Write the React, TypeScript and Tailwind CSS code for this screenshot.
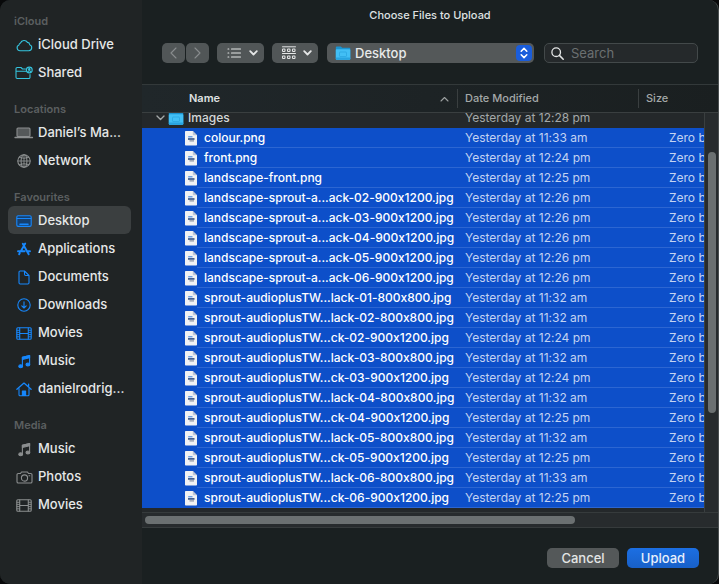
import type { ReactNode } from "react";

function Svg({ w, h, box, children }: { w: number; h: number; box: string; children: ReactNode }) {
  return (
    <svg
      width={w}
      height={h}
      viewBox={box}
      fill="none"
      stroke="currentColor"
      strokeWidth="1.1"
      strokeLinecap="round"
      strokeLinejoin="round"
      aria-hidden="true"
      className="shrink-0"
    >
      {children}
    </svg>
  );
}

const CloudIcon = () => (
  <Svg w={17} h={13} box="0 0 17 13">
    <path d="M4.200 11.700h8.600a3.100 3.100 0 0 0 .9-6 2.400 2.400 0 0 0-2.200-2.300A3.900 3.900 0 0 0 4.500 4 2.300 2.300 0 0 0 3 6a2.950 2.950 0 0 0 1.200 5.700z" />
  </Svg>
);

const SharedIcon = () => (
  <Svg w={18} h={14} box="0 0 18 14">
    <path d="M10.500 3H7.500L6 1.500H2.200A1.200 1.200 0 0 0 1 2.700v8.600a1.200 1.200 0 0 0 1.200 1.200h11.600a1.200 1.200 0 0 0 1.200-1.200V8.500M1 5.200h10" />
    <circle cx="14.300" cy="4" r="2.900" />
    <circle cx="14.300" cy="3.200" r=".7" fill="currentColor" />
    <path d="M12.900 5.600q1.400-1.600 2.800 0" />
  </Svg>
);

const LaptopIcon = () => (
  <Svg w={20} h={12} box="0 0 20 12">
    <rect x="3" y="1" width="13" height="8.500" rx="1" fill="#55595a" />
    <path d="M1 10.500h17.500" strokeWidth="1.300" />
  </Svg>
);

const GlobeIcon = () => (
  <Svg w={14} h={14} box="0 0 14 14">
    <circle cx="7" cy="7" r="6.200" />
    <ellipse cx="7" cy="7" rx="2.900" ry="6.200" />
    <path d="M7 .8v12.400M.8 7h12.400M2.300 3.400q4.700 2 9.400 0M2.300 10.600q4.700-2 9.400 0" strokeWidth=".9" />
  </Svg>
);

const DesktopIcon = () => (
  <Svg w={16} h={12} box="0 0 16 12">
    <rect x=".8" y=".8" width="14.400" height="10.600" rx="1.300" fill="#16406f" />
    <path d="M1 3.500h14" />
    <path d="M4 9.200h8" strokeWidth="1.600" />
  </Svg>
);

const ApplicationsIcon = () => (
  <Svg w={14} h={14} box="0 0 14 14">
    <path d="M5.800 1.800l5.900 10.400M8.200 1.500L4.100 8.800M2.800 11l-.7 1.200M1 9.200h6.600M11 9.200h2" strokeWidth="1.900" />
  </Svg>
);

const DocumentIcon = () => (
  <Svg w={12} h={15} box="0 0 12 15">
    <path d="M2.200 1h4.300L11 5.500v7.300a1.200 1.200 0 0 1-1.200 1.200H2.200A1.200 1.200 0 0 1 1 12.800V2.200A1.200 1.200 0 0 1 2.200 1zM6.500 1v3.300a1.200 1.200 0 0 0 1.200 1.200H11" />
  </Svg>
);

const DownloadIcon = () => (
  <Svg w={14} h={14} box="0 0 14 14">
    <circle cx="7" cy="7" r="6.200" />
    <path d="M7 3.800v6M4.800 7.800L7 10l2.200-2.200" />
  </Svg>
);

const FilmIcon = () => (
  <Svg w={16} h={13} box="0 0 16 13">
    <rect x=".8" y=".8" width="14.400" height="11.400" rx="1" />
    <path d="M3.700 1v11M12.300 1v11M3.700 6.500h8.600" />
    <path d="M1 3.300h2.500M1 5.400h2.500M1 7.600h2.500M1 9.800h2.500M12.500 3.300H15M12.500 5.400H15M12.500 7.600H15M12.500 9.800H15" strokeWidth=".9" />
  </Svg>
);

const NoteIcon = () => (
  <Svg w={13} h={15} box="0 0 13 15">
    <path d="M4.400 12V3.200L11.600 1.500v8.700" />
    <path d="M4.400 3.300l7.200-1.700v2.200L4.400 5.500z" fill="currentColor" />
    <ellipse cx="2.700" cy="12.200" rx="1.900" ry="1.500" fill="currentColor" />
    <ellipse cx="9.900" cy="10.500" rx="1.900" ry="1.500" fill="currentColor" />
  </Svg>
);

const HomeIcon = () => (
  <Svg w={16} h={15} box="0 0 16 15">
    <path d="M.9 7.300L8 1.100l7.100 6.200M12.600 4.800V2.200" strokeWidth="1.300" />
    <path d="M3 6.500v6.300a1 1 0 0 0 1 1h8a1 1 0 0 0 1-1V6.500" />
    <path d="M6.400 13.500V9h3.200v4.500z" fill="currentColor" />
  </Svg>
);

const CameraIcon = () => (
  <Svg w={17} h={13} box="0 0 17 13">
    <path d="M2.300 2.500h2.200l1-1.500h6l1 1.500h2.200A1.300 1.300 0 0 1 16 3.800v6.900a1.300 1.300 0 0 1-1.300 1.300H2.300A1.300 1.300 0 0 1 1 10.700V3.800a1.300 1.300 0 0 1 1.300-1.300z" />
    <circle cx="8.500" cy="7" r="3.100" />
    <path d="M13 4.700h.8" />
  </Svg>
);

function FolderIcon() {
  return (
    <svg width="16" height="14" viewBox="0 0 16 14" aria-hidden="true" className="shrink-0">
      <path d="M.8 1.600a1 1 0 0 1 1-1h4l1.500 1.200h7a1 1 0 0 1 1 1V12.600a1 1 0 0 1-1 1H1.800a1 1 0 0 1-1-1z" fill="#1c93cf" />
      <rect x=".8" y="3.200" width="14.500" height="10.500" rx=".9" fill="#42bff5" />
      <rect x=".8" y="11.500" width="14.500" height="2.200" rx=".9" fill="#28a4e0" />
      <rect x="4.500" y="6" width="7" height="4.500" rx=".6" fill="none" stroke="#2fabe5" />
    </svg>
  );
}

function FileIcon() {
  return (
    <svg width="12" height="15" viewBox="0 0 12 15" aria-hidden="true" className="shrink-0">
      <path d="M.8 0h7L12 4.200v9.600a.8.800 0 0 1-.8.800H.8a.8.800 0 0 1-.8-.8V.8A.8.800 0 0 1 .8 0z" fill="#f1f2f4" />
      <path d="M7.800 0v3.400a.8.800 0 0 0 .8.800H12z" fill="#bfc6d2" />
      <path d="M3.200 5.700h4.300" stroke="#6d9fe6" strokeWidth="1.400" />
      <path d="M3 7.900h6.500" stroke="#24467f" strokeWidth="1.500" />
      <path d="M4.500 9.900h4.500" stroke="#8b93a3" strokeWidth="1.200" />
    </svg>
  );
}

const Chevron = () => (
  <Svg w={9} h={6} box="0 0 9 6">
    <path d="M1.200 1.200l3.300 3.300 3.300-3.300" strokeWidth="1.800" />
  </Svg>
);

type Item = { name: string; icon: ReactNode; selected?: boolean };
type Section = { title: string; tint: string; items: Item[] };

const sections: Section[] = [
  {
    title: "iCloud",
    tint: "text-[#35c3dd]",
    items: [
      { name: "iCloud Drive", icon: <CloudIcon /> },
      { name: "Shared", icon: <SharedIcon /> },
    ],
  },
  {
    title: "Locations",
    tint: "text-[#8b8e8f]",
    items: [
      { name: "Daniel’s Ma...", icon: <LaptopIcon /> },
      { name: "Network", icon: <GlobeIcon /> },
    ],
  },
  {
    title: "Favourites",
    tint: "text-[#1787fb]",
    items: [
      { name: "Desktop", icon: <DesktopIcon />, selected: true },
      { name: "Applications", icon: <ApplicationsIcon /> },
      { name: "Documents", icon: <DocumentIcon /> },
      { name: "Downloads", icon: <DownloadIcon /> },
      { name: "Movies", icon: <FilmIcon /> },
      { name: "Music", icon: <NoteIcon /> },
      { name: "danielrodrig...", icon: <HomeIcon /> },
    ],
  },
  {
    title: "Media",
    tint: "text-[#8b8e8f]",
    items: [
      { name: "Music", icon: <NoteIcon /> },
      { name: "Photos", icon: <CameraIcon /> },
      { name: "Movies", icon: <FilmIcon /> },
    ],
  },
];

const files: [string, string][] = [
  ["colour.png", "11:33 am"],
  ["front.png", "12:24 pm"],
  ["landscape-front.png", "12:25 pm"],
  ["landscape-sprout-a...ack-02-900x1200.jpg", "12:26 pm"],
  ["landscape-sprout-a...ack-03-900x1200.jpg", "12:26 pm"],
  ["landscape-sprout-a...ack-04-900x1200.jpg", "12:26 pm"],
  ["landscape-sprout-a...ack-05-900x1200.jpg", "12:26 pm"],
  ["landscape-sprout-a...ack-06-900x1200.jpg", "12:26 pm"],
  ["sprout-audioplusTW...lack-01-800x800.jpg", "11:32 am"],
  ["sprout-audioplusTW...lack-02-800x800.jpg", "11:32 am"],
  ["sprout-audioplusTW...ck-02-900x1200.jpg", "12:24 pm"],
  ["sprout-audioplusTW...lack-03-800x800.jpg", "11:32 am"],
  ["sprout-audioplusTW...ck-03-900x1200.jpg", "12:24 pm"],
  ["sprout-audioplusTW...lack-04-800x800.jpg", "11:32 am"],
  ["sprout-audioplusTW...ck-04-900x1200.jpg", "12:25 pm"],
  ["sprout-audioplusTW...lack-05-800x800.jpg", "11:32 am"],
  ["sprout-audioplusTW...ck-05-900x1200.jpg", "12:25 pm"],
  ["sprout-audioplusTW...lack-06-800x800.jpg", "11:33 am"],
  ["sprout-audioplusTW...ck-06-900x1200.jpg", "12:25 pm"],
];

function Sidebar() {
  return (
    <nav aria-label="Places" className="flex w-[142px] shrink-0 flex-col gap-[14px] bg-[#202425] pt-3 pr-[11px] pl-2">
      {sections.map((section) => (
        <section key={section.title}>
          <h2 className="pl-[6px] text-[11px] leading-[18px] font-semibold text-[#5b5f60]">{section.title}</h2>
          <ul>
            {section.items.map((item) => (
              <li key={item.name}>
                <button
                  type="button"
                  className={`flex h-7 w-full items-center gap-1 rounded-md pt-0.5 pl-[6px] text-left text-[13px] font-[450] whitespace-nowrap text-[#e6e8e8] ${
                    item.selected ? "bg-[#3b3f40]" : ""
                  }`}
                >
                  <span className={`flex w-5 shrink-0 justify-center ${section.tint}`}>{item.icon}</span>
                  {item.name}
                </button>
              </li>
            ))}
          </ul>
        </section>
      ))}
    </nav>
  );
}

function Toolbar() {
  return (
    <div className="flex h-5 items-stretch px-5 text-[#e4e6e6]">
      <button type="button" aria-label="Back" className="flex w-[23px] items-center justify-center rounded-[5px] bg-[#515657] text-[#888c8d]">
        <Svg w={7} h={12} box="0 0 7 12">
          <path d="M6 1L1 6l5 5" />
        </Svg>
      </button>
      <button type="button" aria-label="Forward" className="ml-px flex w-[23px] items-center justify-center rounded-[5px] bg-[#515657] text-[#888c8d]">
        <Svg w={7} h={12} box="0 0 7 12">
          <path d="M1 1l5 5-5 5" />
        </Svg>
      </button>
      <button type="button" aria-label="View as list" className="ml-2 flex w-[47px] items-center justify-between rounded-[5px] bg-[#515657] pr-[6px] pl-[10px]">
        <Svg w={14} h={10} box="0 0 14 10">
          <path d="M4.500 1h9M4.500 5h9M4.500 9h9M1 1h.8M1 5h.8M1 9h.8" />
        </Svg>
        <Chevron />
      </button>
      <button type="button" aria-label="Group by" className="ml-2 flex w-[46px] items-center justify-between rounded-[5px] bg-[#515657] pr-[6px] pl-[9px]">
        <Svg w={16} h={14} box="0 0 16 14">
          <path d="M1.500 .8h13M1.500 7.500h13" strokeWidth="1" />
          <rect x="1.500" y="3" width="2.500" height="2.500" rx=".7" />
          <rect x="6.500" y="3" width="2.500" height="2.500" rx=".7" />
          <rect x="11.500" y="3" width="2.500" height="2.500" rx=".7" />
          <rect x="1.500" y="10" width="2.500" height="2.500" rx=".7" />
          <rect x="6.500" y="10" width="2.500" height="2.500" rx=".7" />
          <rect x="11.500" y="10" width="2.500" height="2.500" rx=".7" />
        </Svg>
        <Chevron />
      </button>
      <div className="relative ml-[9px] flex flex-1">
        <span className="pointer-events-none absolute top-[3px] left-2">
          <FolderIcon />
        </span>
        <select aria-label="Folder" className="h-5 w-full appearance-none rounded-[5px] bg-[#545859] pl-7 text-[13px] leading-5 font-[450] text-[#e8eaea]">
          <option>Desktop</option>
        </select>
        <span className="pointer-events-none absolute top-[2px] right-[2px] flex h-4 w-4 items-center justify-center rounded-[4px] bg-[#1a5ddb] text-white">
          <Svg w={8} h={12} box="0 0 8 12">
            <path d="M1.200 4.200L4 1.400l2.800 2.800M1.200 7.800L4 10.600l2.800-2.800" strokeWidth="1.500" />
          </Svg>
        </span>
      </div>
      <div className="ml-[10px] flex w-[154px] items-center gap-[7px] rounded-[5px] border border-[#43494a] bg-[#25292b] pl-[6px]">
        <Svg w={13} h={13} box="0 0 13 13">
          <circle cx="5.200" cy="5.200" r="4.300" strokeWidth="1.300" />
          <path d="M8.400 8.400l3.800 3.800" strokeWidth="1.500" />
        </Svg>
        <input
          type="text"
          aria-label="Search"
          placeholder="Search"
          className="w-full min-w-0 bg-transparent text-[13px] leading-4 outline-none placeholder:text-[#6b7071]"
        />
      </div>
    </div>
  );
}

function FileTable() {
  return (
    <table className="w-full table-fixed border-collapse text-left text-[12px] whitespace-nowrap">
      <colgroup>
        <col />
        <col className="w-[181px]" />
        <col className="w-[66px]" />
        <col className="w-[14px]" />
      </colgroup>
      <thead className="bg-linear-to-r from-[#20272a] to-[#1a1f20] text-[11px] text-[#a4a8a8]">
        <tr>
          <th className="p-0">
            <div className="flex h-7 items-center justify-between border-b border-[#3a3f40] pr-2 pl-[47px] font-semibold text-[#dfe1e1]">
              Name
              <span className="text-[#9da1a1]">
                <Svg w={9} h={6} box="0 0 9 6">
                  <path d="M1 5l3.500-3.500L8 5" />
                </Svg>
              </span>
            </div>
          </th>
          <th className="p-0 font-medium">
            <div className="flex h-7 items-center border-b border-[#3a3f40]">
              <span className="border-l border-[#3a3f40] pl-[7px] leading-[19px]">Date Modified</span>
            </div>
          </th>
          <th colSpan={2} className="p-0 font-medium">
            <div className="flex h-7 items-center border-b border-[#3a3f40]">
              <span className="border-l border-[#3a3f40] pl-[7px] leading-[19px]">Size</span>
            </div>
          </th>
        </tr>
      </thead>
      <tbody>
        <tr className="bg-[#24282a]">
          <td className="p-0">
            <div className="flex h-[15px] items-end overflow-hidden">
              <div className="flex h-5 items-center pl-[14px] font-[450] text-[#d5d7d7]">
                <span className="text-[#a4a8a8]">
                  <Svg w={9} h={6} box="0 0 9 6">
                    <path d="M1 1l3.500 3.500L8 1" strokeWidth="1.400" />
                  </Svg>
                </span>
                <span className="mr-1 ml-[3px]">
                  <FolderIcon />
                </span>
                Images
              </div>
            </div>
          </td>
          <td className="p-0">
            <div className="flex h-[15px] items-end overflow-hidden pl-2 leading-5 text-[#a4a8a8]">Yesterday at 12:28 pm</div>
          </td>
          <td className="p-0" />
          <td rowSpan={files.length + 2} aria-hidden="true" className="border-l border-[#3a3f40] bg-[#272b2d] p-0 align-top">
            <div className="mt-[39px] ml-[3px] h-[261px] w-2 rounded-full bg-[#6b7071]" />
          </td>
        </tr>
        {files.map(([name, time]) => (
          <tr key={name} className="bg-[#0d4fc9] text-[#c3d3f2]">
            <td className="p-0">
              <div className="flex h-5 pl-[43px]">
                <div className="pt-[3px]">
                  <FileIcon />
                </div>
                <div className="flex-1 border-b border-[#2c66d2] pl-[7px] leading-5 font-[450] text-white">{name}</div>
              </div>
            </td>
            <td className="p-0">
              <div className="h-5 border-b border-[#2c66d2] pl-2 leading-5">Yesterday at {time}</div>
            </td>
            <td className="p-0">
              <div className="h-5 overflow-hidden border-b border-[#2c66d2] pl-[31px] leading-5">Zero bytes</div>
            </td>
          </tr>
        ))}
        <tr className="bg-[#24282a]">
          <td colSpan={3} className="h-1 p-0" />
        </tr>
      </tbody>
    </table>
  );
}

export default function App() {
  return (
    <div className="min-h-screen bg-[#08090a] font-[Inter,'Liberation_Sans',sans-serif] [font-feature-settings:'calt'_0]">
      <div className="flex min-h-screen overflow-hidden rounded-[10px] border-r border-[#4a4f50] bg-[#1a2021]">
        <Sidebar />
        <main className="flex min-w-0 flex-1 flex-col">
          <header className="border-b border-[#33393a] pb-[21px]">
            <h1 className="pt-[6px] pb-[19px] text-center text-[11px] leading-[18px] font-medium text-[#dfe1e1]">
              Choose Files to Upload
            </h1>
            <Toolbar />
          </header>
          <FileTable />
          <div aria-hidden="true" className="border-y border-[#363b3c] bg-[#272b2d] py-[3px] pl-[3px]">
            <div className="h-2 w-3/4 rounded-full bg-[#6b7071]" />
          </div>
          <footer className="flex flex-1 items-start justify-end gap-2 pt-5 pr-[19px] pb-4 text-[13px] leading-5 font-medium">
            <button type="button" className="w-[72px] rounded-[5px] bg-[#545859] text-[#e4e6e6]">
              Cancel
            </button>
            <button type="button" className="w-[72px] rounded-[5px] bg-linear-to-b from-[#1c6fe3] to-[#1860c8] text-[#e8f0fc]">
              Upload
            </button>
          </footer>
        </main>
      </div>
    </div>
  );
}
